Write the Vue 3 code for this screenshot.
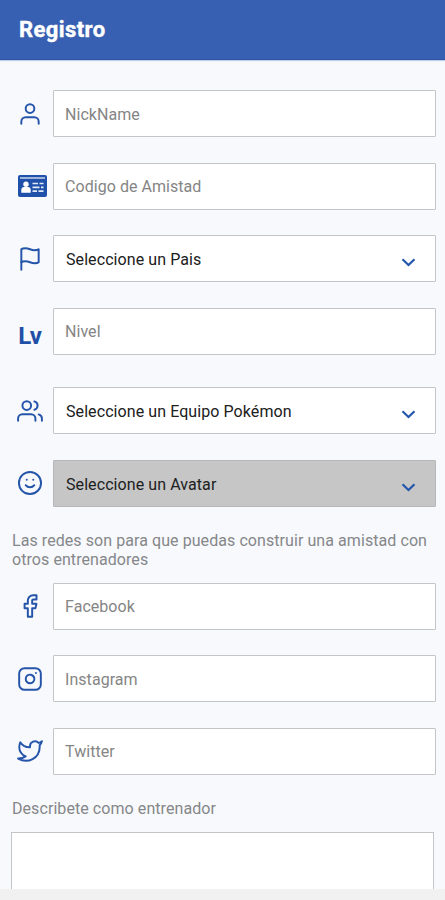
<script setup>
const account = [
  { id: 'nick', icon: 'user', label: 'NickName' },
  { id: 'code', icon: 'card', label: 'Codigo de Amistad' },
  { id: 'country', icon: 'flag', label: 'Seleccione un Pais', select: true },
  { id: 'level', icon: 'level', label: 'Nivel' },
]
const team = [
  { id: 'team', icon: 'users', label: 'Seleccione un Equipo Pokémon', select: true },
  { id: 'avatar', icon: 'smile', label: 'Seleccione un Avatar', select: true, disabled: true },
]
const social = [
  { id: 'facebook', icon: 'facebook', label: 'Facebook' },
  { id: 'instagram', icon: 'instagram', label: 'Instagram' },
  { id: 'twitter', icon: 'twitter', label: 'Twitter' },
]
const groups = [
  { id: 'account', rows: account },
  { id: 'team', rows: team },
  { id: 'social', rows: social, intro: 'Las redes son para que puedas construir una amistad con otros entrenadores' },
]

const icons = {
  user: ['M20 21v-2a4 4 0 0 0-4-4H8a4 4 0 0 0-4 4v2', 'M12 3a4 4 0 1 0 0 8a4 4 0 0 0 0-8z'],
  flag: ['M4 15s1-1 4-1 5 2 8 2 4-1 4-1V3s-1 1-4 1-5-2-8-2-4 1-4 1z', 'M4 22V15'],
  users: [
    'M17 21v-2a4 4 0 0 0-4-4H5a4 4 0 0 0-4 4v2',
    'M9 3a4 4 0 1 0 0 8a4 4 0 0 0 0-8z',
    'M23 21v-2a4 4 0 0 0-3-3.87',
    'M16 3.13a4 4 0 0 1 0 7.75',
  ],
  smile: ['M12 1.8a10.2 10.2 0 1 0 0 20.4a10.2 10.2 0 0 0 0-20.4z', 'M8 14s1.5 2 4 2 4-2 4-2', 'M9 9h.01', 'M15 9h.01'],
  facebook: ['M18 2h-3a5 5 0 0 0-5 5v3H7v4h3v8h4v-8h3l1-4h-4V7a1 1 0 0 1 1-1h3z'],
  instagram: [
    'M7 2h10a5 5 0 0 1 5 5v10a5 5 0 0 1-5 5H7a5 5 0 0 1-5-5V7a5 5 0 0 1 5-5z',
    'M16 11.37A4 4 0 1 1 12.63 8 4 4 0 0 1 16 11.37z',
    'M17.5 6.5h.01',
  ],
  twitter: ['M23 3a10.9 10.9 0 0 1-3.14 1.53 4.48 4.48 0 0 0-7.86 3v1A10.66 10.66 0 0 1 3 4s-4 9 5 13a11.64 11.64 0 0 1-7 2c9 5 20 0 20-11.5a4.5 4.5 0 0 0-.08-.83A7.72 7.72 0 0 0 23 3z'],
}
</script>

<template>
  <div class="screen">
    <header class="bar"><h1>Registro</h1></header>
    <main class="form">
      <section v-for="group in groups" :key="group.id" class="group" :class="'group-' + group.id">
        <p v-if="group.intro" class="note">{{ group.intro }}</p>
        <div v-for="row in group.rows" :key="row.id" class="row">
          <div class="lead">
            <span v-if="row.icon === 'level'" class="lv">Lv</span>
            <svg v-else-if="row.icon === 'card'" class="card" viewBox="0 0 29 22">
              <rect width="29" height="22" rx="2" fill="#1f51aa" />
              <path d="M2 3h25" stroke="#e3ebf8" stroke-width="1.3" />
              <circle cx="8" cy="9.3" r="2.7" fill="#fff" />
              <path d="M3.3 17.8v-2.600q0-3.200 2.800-3.200h3.800q2.800 0 2.800 3.200v2.600z" fill="#fff" />
              <path d="M14.5 8.5h5.5M21.500 8.500h4M14.500 12.300h7M23 12.300h2.500M14.500 16.200h4.500M20.500 16.200h5" stroke="#e3ebf8" stroke-width="1.7" />
            </svg>
            <svg v-else class="icon" viewBox="0 0 24 24">
              <path v-for="d in icons[row.icon]" :key="d" :d="d" />
            </svg>
          </div>
          <div class="field" :class="{ select: row.select, disabled: row.disabled }">
            <span>{{ row.label }}</span>
            <svg v-if="row.select" class="chevron" viewBox="0 0 14 9"><path d="M1 1.3l6 5.7 6-5.7" /></svg>
          </div>
        </div>
      </section>
      <p class="note describe">Describete como entrenador</p>
      <div class="area"></div>
    </main>
    <footer class="bottom"></footer>
  </div>
</template>

<style>
body {
  margin: 0;
  background: #f8f9fd;
}
</style>

<style scoped>
.screen {
  box-sizing: border-box;
  display: flex;
  flex-direction: column;
  height: 900px;
  overflow: hidden;
  background: #f8f9fd;
  font-family: Roboto, sans-serif;
}
.bar {
  box-sizing: border-box;
  flex: none;
  height: 60px;
  padding-left: 19px;
  display: flex;
  align-items: center;
  background: #3860b2;
  border-bottom: 1px solid #3055a5;
  box-shadow: 0 1px 1px #c3cfea;
}
h1 {
  margin: 0;
  color: #fff;
  font-size: 22px;
  font-weight: 700;
  line-height: 28px;
  letter-spacing: 0.4px;
  -webkit-text-stroke: 0.4px #fff;
}
.form {
  flex: 1;
  min-height: 0;
  overflow: hidden;
  padding: 30px 9px 0 12px;
}
.group {
  display: flex;
  flex-direction: column;
  gap: 25.6px;
}
.group-team {
  margin-top: 32.6px;
}
.group-social {
  margin-top: 24px;
}
.row {
  display: flex;
  height: 47px;
}
.lead {
  width: 37px;
  margin-right: 4px;
  flex: none;
  display: flex;
  align-items: center;
  justify-content: center;
}
.icon {
  width: 26px;
  height: 26px;
  margin-right: 1px;
  fill: none;
  stroke: #2455a9;
  stroke-width: 1.8;
  stroke-linecap: round;
  stroke-linejoin: round;
}
.card {
  width: 29px;
  height: 22px;
  margin: 0 0 1px 3px;
}
.lv {
  color: #1f50a6;
  font-size: 24px;
  font-weight: 700;
  line-height: 28px;
  margin-top: 9px;
  margin-right: 1px;
}
.field {
  box-sizing: border-box;
  flex: 1;
  display: flex;
  align-items: center;
  justify-content: space-between;
  padding: 1px 19px 0 11px;
  border: 1px solid #c3c5c8;
  border-radius: 1px;
  background: #fff;
  color: #858585;
  font-size: 16px;
  letter-spacing: 0.05px;
  white-space: nowrap;
}
.select {
  padding-left: 12px;
  padding-top: 2px;
  color: #202020;
  letter-spacing: 0.08px;
}
.disabled {
  background: #c6c6c6;
  border-color: #b7b7b9;
}
.chevron {
  width: 15px;
  height: 9px;
  margin-top: 6px;
  fill: none;
  stroke: #2457ab;
  stroke-width: 2.2;
}
.note {
  margin: 0;
  color: #858789;
  font-size: 16px;
  line-height: 19px;
  letter-spacing: 0.07px;
}
.group-social .note {
  margin-bottom: -12px;
}
.describe {
  margin-top: 24px;
}
.area {
  box-sizing: border-box;
  height: 100px;
  margin-top: 14px;
  margin-right: 2px;
  margin-left: -1px;
  border: 1px solid #c3c5c8;
  background: #fff;
}
.bottom {
  flex: none;
  height: 11px;
  background: #f1f1f2;
}
</style>
